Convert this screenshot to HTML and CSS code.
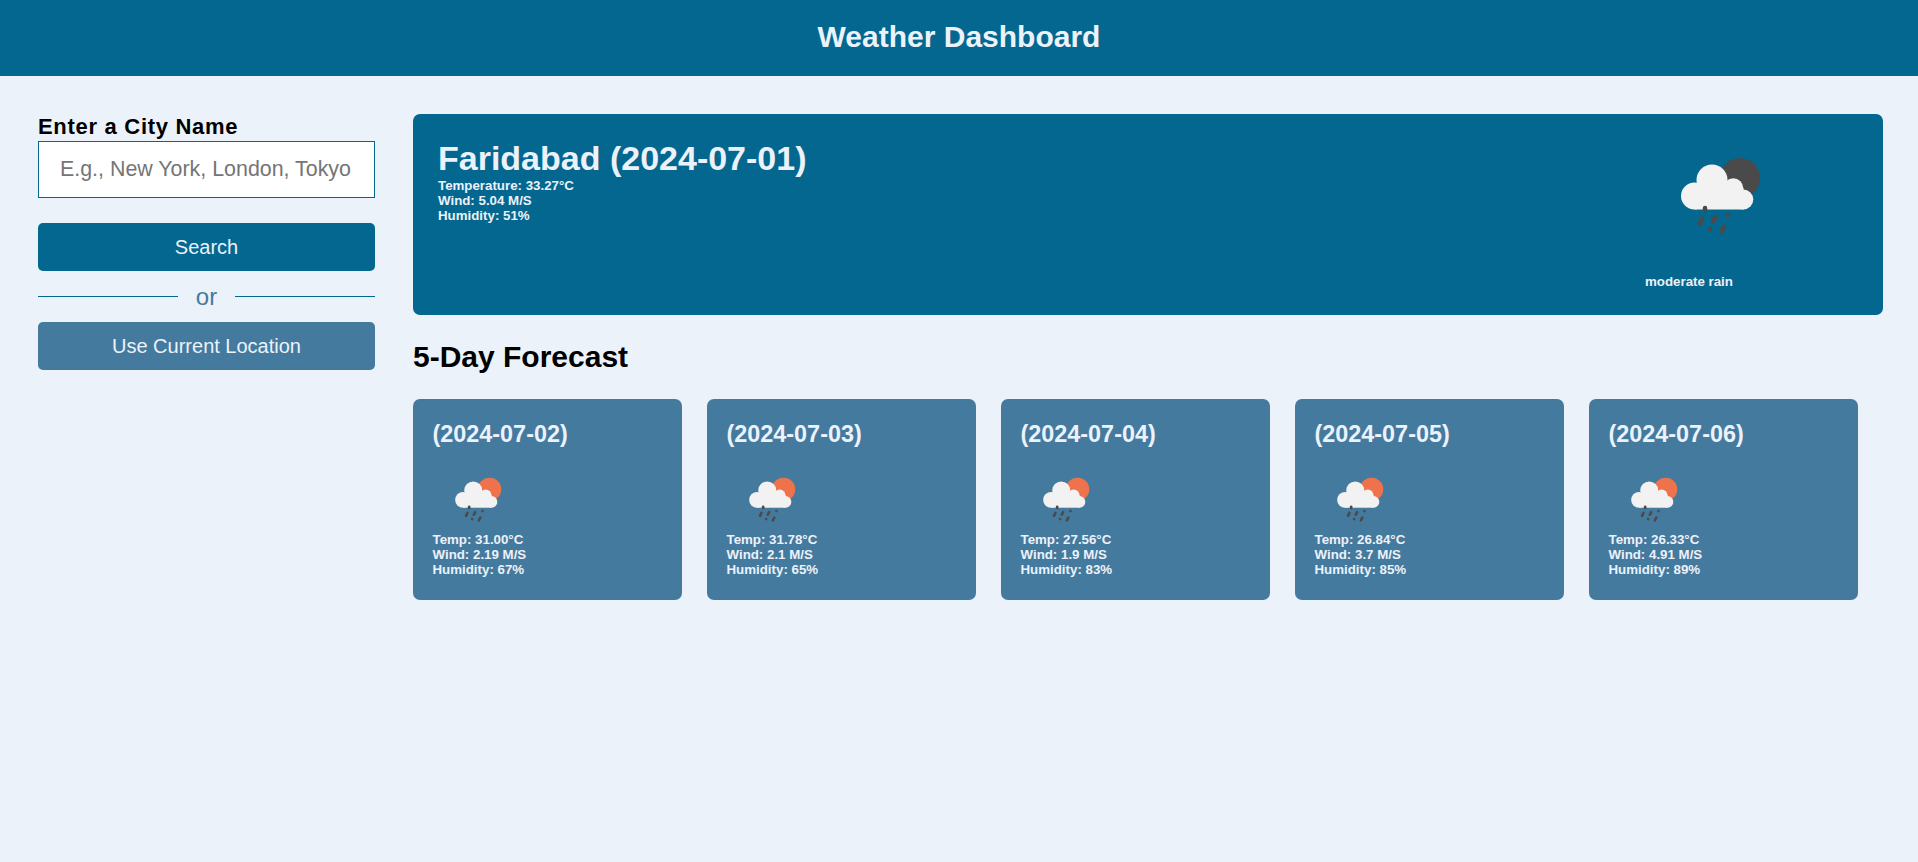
FILE: index.html
```html
<!DOCTYPE html>
<html lang="en">
<head>
<meta charset="utf-8">
<title>Weather Dashboard</title>
<link rel="stylesheet" href="styles.css">
</head>
<body>
<svg class="defs" width="0" height="0" aria-hidden="true">
  <symbol id="rain-icon" viewBox="0 0 120 120">
    <circle class="sun" cx="97" cy="40" r="20"/>
    <g class="cloud">
      <circle cx="51.500" cy="58" r="13.500"/>
      <circle cx="69" cy="42" r="15.500"/>
      <circle cx="90.300" cy="50.300" r="10"/>
      <circle cx="100.300" cy="61.500" r="10"/>
      <rect x="51.500" y="50" width="49" height="21.500"/>
    </g>
    <g class="drops">
      <path d="M62 70v2"/>
      <path d="M59 80.500l-2.400 5"/>
      <path d="M72.200 79l-2.200 4.500"/>
      <path d="M84.700 77.300h.1"/>
      <path d="M67 91h.1"/>
      <path d="M81 88.700l-2.400 4.600"/>
    </g>
  </symbol>
</svg>
<header class="topbar"><h1 class="topbar-title">Weather Dashboard</h1></header>
<div class="layout">
  <aside class="sidebar">
    <label class="city-label" for="city">Enter a City Name</label>
    <input class="city-input" id="city" type="text" placeholder="E.g., New York, London, Tokyo">
    <button class="btn btn-search" type="button">Search</button>
    <div class="divider"><span class="divider-text">or</span></div>
    <button class="btn btn-location" type="button">Use Current Location</button>
  </aside>
  <main class="content">
    <section class="today">
      <div class="today-details">
        <h2 class="today-title">Faridabad (2024-07-01)</h2>
        <p class="stat">Temperature: 33.27°C</p>
        <p class="stat">Wind: 5.04 M/S</p>
        <p class="stat">Humidity: 51%</p>
      </div>
      <div class="today-icon">
        <svg class="icon-large"><use href="#rain-icon"/></svg>
        <p class="stat today-desc">moderate rain</p>
      </div>
    </section>
    <h2 class="forecast-title">5-Day Forecast</h2>
    <div class="forecast">
      <article class="day">
        <h3 class="day-date">(2024-07-02)</h3>
        <svg class="icon-small"><use href="#rain-icon"/></svg>
        <p class="stat">Temp: 31.00°C</p>
        <p class="stat">Wind: 2.19 M/S</p>
        <p class="stat">Humidity: 67%</p>
      </article>
      <article class="day">
        <h3 class="day-date">(2024-07-03)</h3>
        <svg class="icon-small"><use href="#rain-icon"/></svg>
        <p class="stat">Temp: 31.78°C</p>
        <p class="stat">Wind: 2.1 M/S</p>
        <p class="stat">Humidity: 65%</p>
      </article>
      <article class="day">
        <h3 class="day-date">(2024-07-04)</h3>
        <svg class="icon-small"><use href="#rain-icon"/></svg>
        <p class="stat">Temp: 27.56°C</p>
        <p class="stat">Wind: 1.9 M/S</p>
        <p class="stat">Humidity: 83%</p>
      </article>
      <article class="day">
        <h3 class="day-date">(2024-07-05)</h3>
        <svg class="icon-small"><use href="#rain-icon"/></svg>
        <p class="stat">Temp: 26.84°C</p>
        <p class="stat">Wind: 3.7 M/S</p>
        <p class="stat">Humidity: 85%</p>
      </article>
      <article class="day">
        <h3 class="day-date">(2024-07-06)</h3>
        <svg class="icon-small"><use href="#rain-icon"/></svg>
        <p class="stat">Temp: 26.33°C</p>
        <p class="stat">Wind: 4.91 M/S</p>
        <p class="stat">Humidity: 89%</p>
      </article>
    </div>
  </main>
</div>
</body>
</html>
```
FILE: styles.css
```css
* { box-sizing: border-box; }
html, body { height: 100%; }
body {
  margin: 0;
  background: #ebf2fa;
  color: #000;
  font-family: "Liberation Sans", Arial, sans-serif;
  overflow: hidden;
}
.defs { display: block; height: 0; }
.topbar {
  height: 76px;
  padding-bottom: 2px;
  background: #04678f;
  display: flex;
  align-items: center;
  justify-content: center;
}
.topbar-title {
  margin: 0;
  color: #ebf2fa;
  font-size: 30px;
  line-height: 34px;
  font-weight: 700;
}
.layout {
  display: flex;
  gap: 38px;
  padding: 38px 35px 0 38px;
}
.sidebar {
  flex: 0 0 337px;
  display: flex;
  flex-direction: column;
}
.city-label {
  font-size: 22px;
  line-height: 25px;
  padding-bottom: 2px;
  font-weight: 700;
  letter-spacing: .7px;
}
.city-input {
  height: 57px;
  padding: 0 21px;
  border: 1px solid #04678f;
  background: #fff;
  font: 21.400px "Liberation Sans", Arial, sans-serif;
  outline: none;
}
.city-input::placeholder { color: #757575; opacity: 1; }
.btn {
  height: 48px;
  border: 0;
  border-radius: 5px;
  color: #ebf2fa;
  font: 20px "Liberation Sans", Arial, sans-serif;
  cursor: pointer;
}
.btn-search { margin-top: 25px; background: #04678f; }
.btn-location { background: #457a9f; }
.divider {
  height: 51px;
  display: flex;
  align-items: center;
  gap: 18px;
  color: #457a9f;
  font-size: 24px;
}
.divider::before, .divider::after {
  content: "";
  flex: 1;
  height: 1px;
  background: #04678f;
}
.content { flex: 1; min-width: 0; }
.today {
  height: 201px;
  padding: 25px 120px 0 25px;
  display: flex;
  justify-content: space-between;
  background: #04678f;
  border-radius: 7px;
  color: #ebf2fa;
}
.today-title {
  margin: 0;
  font-size: 34px;
  line-height: 39px;
  font-weight: 700;
}
.stat {
  margin: 0;
  font-size: 13.300px;
  line-height: 15px;
  font-weight: 700;
}
.today-icon { width: 120px; margin-top: -1px; }
.icon-large { display: block; width: 120px; height: 120px; margin-bottom: 16px; --sun: #4a4a4a; }
.today-desc { padding-left: 2px; white-space: nowrap; }
.sun { fill: var(--sun); }
.cloud { fill: #f2f2f2; }
.drops path { fill: none; stroke: #4a4a4a; stroke-width: 4.500; stroke-linecap: round; }
.forecast-title {
  margin: 25px 0 0;
  font-size: 30px;
  line-height: 34px;
  font-weight: 700;
}
.forecast {
  display: flex;
  gap: 25px;
  margin-top: 25px;
}
.day {
  flex: 0 0 269px;
  height: 201px;
  padding: 22px 19px 0 19.500px;
  background: #457a9f;
  border-radius: 7px;
  color: #ebf2fa;
}
.day-date {
  margin: 0;
  font-size: 23.400px;
  line-height: 27px;
  font-weight: 700;
}
.icon-small { display: block; width: 70px; height: 70px; margin: 18px 0 -4px; --sun: #ee734c; }
```
